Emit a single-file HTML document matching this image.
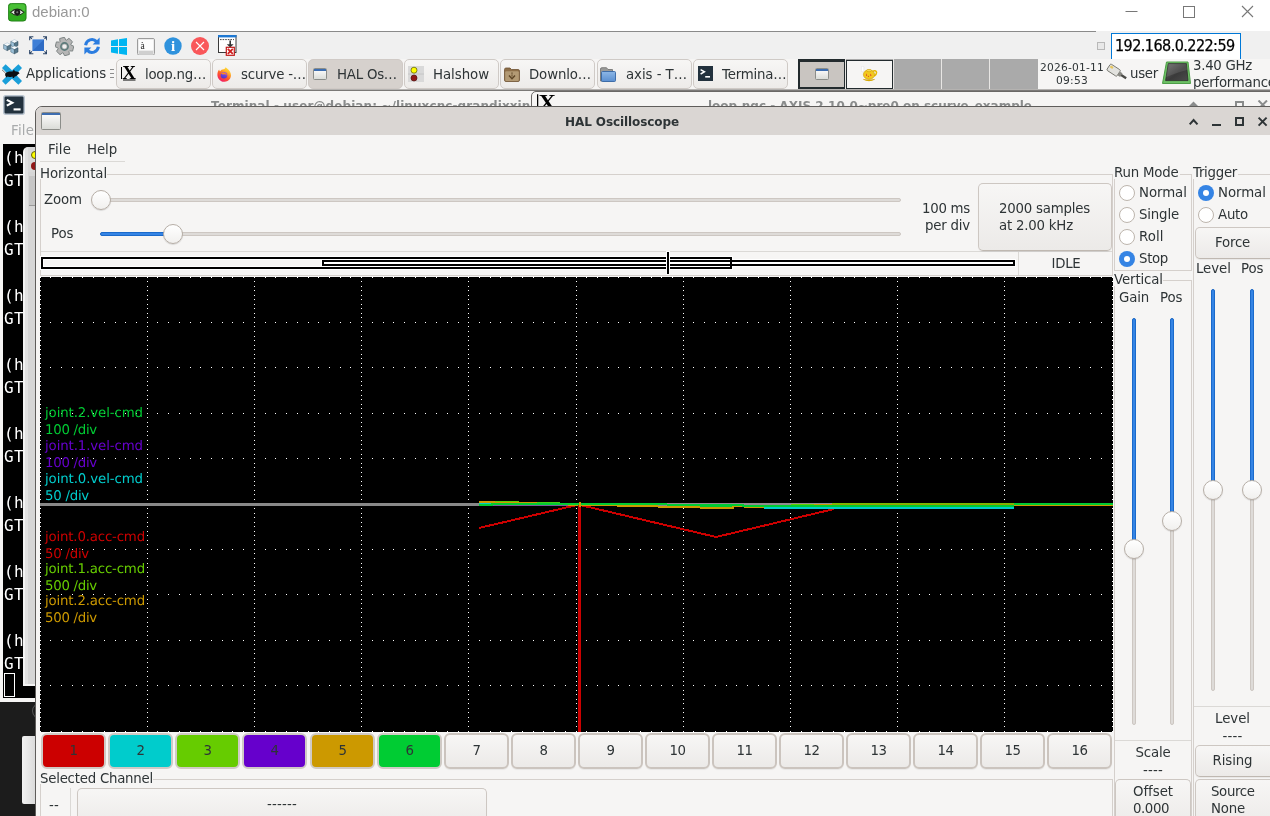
<!DOCTYPE html><html><head><meta charset="utf-8"><title>debian:0</title><style>
*{box-sizing:border-box;margin:0;padding:0}
html,body{width:1270px;height:816px;overflow:hidden;background:#f6f5f4}
body{position:relative;font-family:"DejaVu Sans","Liberation Sans",sans-serif;font-size:13.33px;color:#2e3436;line-height:1}
#root{position:absolute;left:0;top:0;width:1270px;height:816px;overflow:hidden;will-change:transform}
.a{position:absolute}
.t{position:absolute;white-space:nowrap;line-height:16px;height:16px;margin-top:1px}
.btn{position:absolute;border:1px solid #cdc7c2;border-bottom-color:#bfb8b1;border-radius:5px;background:linear-gradient(#f7f6f5,#eceae8);box-shadow:0 1px 1px rgba(0,0,0,.06)}
.hl{position:absolute;height:1px;background:#d5d0cc}
.vl{position:absolute;width:1px;background:#d5d0cc}
.sep{background:#dbd9d6}
.knob{position:absolute;width:20px;height:20px;border-radius:50%;border:1px solid #b6aea6;background:linear-gradient(#ffffff,#f1f0ee);box-shadow:0 1px 1px rgba(0,0,0,.12)}
.trough{position:absolute;background:#dedbd8;border:1px solid #cdc7c2;border-radius:2px}
.fill{position:absolute;background:#3584e4;border:1px solid #1b6acb;border-radius:2px}
.radio{position:absolute;width:16px;height:16px;border-radius:50%;border:1px solid #bdb5ad;background:#fff}
.radio.on{border:none;background:#3584e4}
.radio.on::after{content:"";position:absolute;left:5px;top:5px;width:6px;height:6px;border-radius:50%;background:#fff}
.tb{position:absolute;top:59px;height:30px;border:1px solid #cfcac6;border-radius:5px;background:linear-gradient(#f7f6f5,#edebe9)}
.tb.act{background:#d6d1cd;border-color:#d0cac6}
.tb span{position:absolute;left:28px;top:7px;line-height:16px;font-size:13.33px;white-space:nowrap}
</style></head><body><div id="root">
<div class="a" style="left:0;top:0;width:1270px;height:31px;background:#fff"></div>
<div class="a" style="left:0;top:32px;width:1270px;height:27px;background:#f0f0f0"></div>
<div class="a" style="left:0;top:31px;width:1096px;height:1px;background:#8a8a8a"></div>
<div class="a" style="left:1096px;top:31px;width:174px;height:1px;background:#f0f0f0"></div>
<svg class="a" style="left:8px;top:3px" width="18.5" height="18.5" viewBox="0 0 22 22" ><rect x="0.5" y="0.5" width="21" height="21" rx="3.5" fill="#2faa1e" stroke="#1d7a12"/><rect x="1.5" y="1.5" width="19" height="9" rx="3" fill="#5fd04a" opacity=".55"/><path d="M3 11 Q11 3.5 19 11 Q11 18.5 3 11Z" fill="#e9efe6" stroke="#1c2a18" stroke-width="1.2"/><circle cx="11" cy="11" r="3.6" fill="#1b1b1b"/><circle cx="11" cy="11" r="1.3" fill="#777"/></svg>
<div class="t" style="left:32px;top:2px;font-family:'Liberation Sans',sans-serif;font-size:15px;color:#999;line-height:18px;height:18px">debian:0</div>
<svg class="a" style="left:1110px;top:0" width="160" height="31" viewBox="0 0 160 31"><path d="M15.5 11.5H27.5" stroke="#777" stroke-width="1"/><rect x="73.5" y="6.5" width="11" height="11" fill="none" stroke="#777"/><path d="M132 6L143 17M143 6L132 17" stroke="#777" stroke-width="1.1"/></svg>
<svg class="a" style="left:2px;top:37px" width="18" height="18" viewBox="0 0 18 18" ><path d="M8.8 4.4 l3.6 -1.8 l3.6 1.8 l-3.6 1.8 z" fill="#f7fbfd" stroke="#8aa9bd" stroke-width=".4"/><path d="M8.8 4.4 l3.6 1.8 v4.2 l-3.6 -1.8 z" fill="#9cc0d8" stroke="#3f5f72" stroke-width=".5"/><path d="M12.4 6.2 l3.6 -1.8 v4.2 l-3.6 1.8 z" fill="#56788b" stroke="#2f4a5a" stroke-width=".5"/><path d="M1.6 7.6 l3.6 -1.8 l3.6 1.8 l-3.6 1.8 z" fill="#f7fbfd" stroke="#8aa9bd" stroke-width=".4"/><path d="M1.6 7.6 l3.6 1.8 v4.2 l-3.6 -1.8 z" fill="#9cc0d8" stroke="#3f5f72" stroke-width=".5"/><path d="M5.2 9.4 l3.6 -1.8 v4.2 l-3.6 1.8 z" fill="#56788b" stroke="#2f4a5a" stroke-width=".5"/><path d="M8.8 10.8 l3.6 -1.8 l3.6 1.8 l-3.6 1.8 z" fill="#f7fbfd" stroke="#8aa9bd" stroke-width=".4"/><path d="M8.8 10.8 l3.6 1.8 v4.2 l-3.6 -1.8 z" fill="#9cc0d8" stroke="#3f5f72" stroke-width=".5"/><path d="M12.4 12.6 l3.6 -1.8 v4.2 l-3.6 1.8 z" fill="#56788b" stroke="#2f4a5a" stroke-width=".5"/></svg>
<svg class="a" style="left:28.5px;top:36.4px" width="18.4" height="18.4" viewBox="0 0 19 19" ><rect x="3.5" y="3.5" width="12" height="12" fill="#3f7fd6"/><path d="M3.5 15.5 L15.5 3.5 V15.5Z" fill="#2f6cc4"/><g stroke="#2d4668" stroke-width="1.1" fill="none"><path d="M0.7 4.5V0.7H4.5M0.7 0.7L3 3"/><path d="M14.5 0.7H18.3V4.5M18.3 0.7L16 3"/><path d="M0.7 14.5V18.3H4.5M0.7 18.3L3 16"/><path d="M14.5 18.3H18.3V14.5M18.3 18.3L16 16"/></g></svg>
<svg class="a" style="left:55px;top:36.5px" width="19" height="19" viewBox="0 0 19 19" ><polygon points="4.65,1.57 9.41,0.20 10.70,2.91 11.53,3.12 13.94,1.33 17.51,4.78 15.81,7.25 16.04,8.07 18.80,9.26 17.60,14.08 14.61,13.84 14.01,14.45 14.35,17.43 9.59,18.80 8.30,16.09 7.47,15.88 5.06,17.67 1.49,14.22 3.19,11.75 2.96,10.93 0.20,9.74 1.40,4.92 4.39,5.16 4.99,4.55" fill="#b6b6b6" stroke="#7d8484" stroke-width="1" stroke-linejoin="round"/><circle cx="9.5" cy="9.5" r="3.6" fill="none" stroke="#5d7b7b" stroke-width="1.6"/><circle cx="9.5" cy="9.5" r="2" fill="#f0f0f0"/></svg>
<svg class="a" style="left:83px;top:37px" width="18" height="18" viewBox="0 0 18 18" ><g fill="none" stroke="#2b7de0" stroke-width="3"><path d="M2.6 8.2A6.4 6.4 0 0 1 13.6 4.6"/><path d="M15.4 9.8A6.4 6.4 0 0 1 4.4 13.4"/></g><path d="M16.6 0.5V7.6H9.6Z" fill="#2b7de0"/><path d="M1.4 17.5V10.4H8.4Z" fill="#2b7de0"/></svg>
<svg class="a" style="left:110.5px;top:38px" width="16.5" height="17" viewBox="0 0 16.5 17" ><path d="M0 2.4L7 1.3V8H0Z M8 1.15L16.5 0V8H8Z M0 9H7V15.7L0 14.6Z M8 9H16.5V17L8 15.85Z" fill="#00b5f1"/></svg>
<svg class="a" style="left:137px;top:37.5px" width="18" height="17.5" viewBox="0 0 18 17.5" ><rect x="0.5" y="0.5" width="17" height="16.5" rx="1.5" fill="#fafafa" stroke="#9c9c9c"/><rect x="1.5" y="13" width="15" height="3.2" fill="#cfcfcf"/><rect x="1.3" y="1.3" width="15.4" height="11.4" fill="#fdfdfd" stroke="#e2e2e2" stroke-width=".6"/><text x="3.6" y="10.6" font-family="Liberation Serif,serif" font-size="9.5" fill="#222">à</text></svg>
<svg class="a" style="left:164px;top:37.3px" width="18" height="18" viewBox="0 0 18 18" ><circle cx="9" cy="9" r="8.7" fill="#2f92dd"/><text x="9" y="14.2" text-anchor="middle" font-family="Liberation Serif,serif" font-weight="bold" font-size="15" fill="#fff">i</text></svg>
<svg class="a" style="left:191px;top:37.3px" width="18" height="18" viewBox="0 0 18 18" ><circle cx="9" cy="9" r="9" fill="#f9575a"/><path d="M5 5L13 13M13 5L5 13" stroke="#fff" stroke-width="1.1"/></svg>
<svg class="a" style="left:218px;top:35px" width="19" height="21" viewBox="0 0 19 21" ><rect x="0.5" y="0.5" width="17.5" height="17" fill="#fff" stroke="#3a3a3a"/><rect x="0" y="0" width="18.5" height="2.4" fill="#1e78d2"/><path d="M2 4.6H16" stroke="#444" stroke-width="1" stroke-dasharray="1.6 1"/><path d="M12.2 5.5V10.5" stroke="#333" stroke-width="1.6"/><path d="M8.8 9.2H15.6L12.2 12.6Z" fill="#333"/><rect x="8.3" y="12.3" width="8" height="8" fill="#fff" stroke="#c01818" stroke-width="1.2"/><path d="M9.8 13.8L14.8 18.8M14.8 13.8L9.8 18.8" stroke="#d21f1f" stroke-width="1.8"/></svg>
<div class="a" style="left:1111px;top:33px;width:130px;height:27px;background:#fff;border:1px solid #0078d7"></div>
<div class="t" style="left:1115px;top:35px;font-family:'DejaVu Sans Condensed','DejaVu Sans',sans-serif;font-size:16px;letter-spacing:-0.55px;-webkit-text-stroke:0.25px #000;color:#000;line-height:20px;height:20px">192.168.0.222:59</div>
<div class="a" style="left:1097px;top:42px;width:8px;height:8px;border:1px solid #b8b8b8;background:#e8e8e8"></div>
<div class="a" style="left:0;top:59px;width:1270px;height:31px;background:#f6f5f4"></div>
<div class="a" style="left:0;top:89px;width:1270px;height:1px;background:#b5b3b1"></div>
<div class="a" style="left:0;top:90px;width:1270px;height:1px;background:#7b7977"></div>
<svg class="a" style="left:2px;top:63.5px" width="20" height="21" viewBox="0 0 20 21" ><path d="M3.6 0.3L10 6.2L16.4 0.3L20 4L13.8 10.5L20 17L16.4 20.7L10 14.8L3.6 20.7L0 17L6.2 10.5L0 4Z" fill="#1a9fd9"/><path d="M3.5 9.2C5 7.6 8 7.2 10.5 7.6L12 5.6L13 7.4C14.5 7.2 16.5 8 17.6 9.2L15.8 10.6C15 12 13.5 12.6 12.5 12.8L12 14H10.6L10.8 12.8C9 13 7 13 5.6 12.4L4.6 13.6L3.8 12.4C3 11.4 3 10.2 3.5 9.2Z" fill="#0b0f12"/><path d="M0 5.8L3.8 9.4" stroke="#222" stroke-width=".6"/></svg>
<div class="t" style="left:26px;top:65px;letter-spacing:-0.120px">Applications</div>
<div class="a" style="left:110px;top:69px;width:4px;height:10px;background:linear-gradient(#8d8d8d 0 1px,transparent 1px 4px,#8d8d8d 4px 5px,transparent 5px 8px,#8d8d8d 8px 9px,transparent 9px)"></div>
<div class="tb" style="left:116px;width:95px"><span style="letter-spacing:-0.246px">loop.ng…</span></div>
<div class="tb" style="left:212px;width:95px"><span style="letter-spacing:-0.187px">scurve -…</span></div>
<div class="tb act" style="left:308px;width:95px"><span style="letter-spacing:-0.227px">HAL Os…</span></div>
<div class="tb" style="left:404px;width:95px"><span style="letter-spacing:-0.051px">Halshow</span></div>
<div class="tb" style="left:500px;width:95px"><span style="letter-spacing:-0.139px">Downlo…</span></div>
<div class="tb" style="left:597px;width:95px"><span style="letter-spacing:-0.053px">axis - T…</span></div>
<div class="tb" style="left:693px;width:95px"><span style="letter-spacing:-0.184px">Termina…</span></div>
<svg class="a" style="left:121px;top:66px" width="15" height="15" viewBox="0 0 15 15" ><text x="1.2" y="13" font-family="Liberation Serif,serif" font-weight="bold" font-size="19" fill="#000">X</text><path d="M0.5 1V13" stroke="#000" stroke-width="1"/><path d="M2 14H14.5" stroke="#000" stroke-width="1"/></svg>
<svg class="a" style="left:216.8px;top:66.6px" width="14.6" height="15" viewBox="0 0 14.6 15" ><defs><linearGradient id="ffg" x1="0.85" y1="0" x2="0.25" y2="1"><stop offset="0" stop-color="#fff03a"/><stop offset=".3" stop-color="#ffb52a"/><stop offset=".6" stop-color="#ff5a26"/><stop offset="1" stop-color="#f0166e"/></linearGradient><linearGradient id="ffp" x1="0.7" y1="0" x2="0.3" y2="1"><stop offset="0" stop-color="#9a4dea"/><stop offset="1" stop-color="#4338cc"/></linearGradient></defs><path d="M8.6 0.2C9.6 1.2 11.2 2 12.6 4C14.4 6.6 14.4 9.6 13 11.8C11.6 14 9.2 15 6.8 14.8C3.4 14.5 0.6 11.8 0.4 8.2C0.3 6 1 4 2.2 2.6C2.2 3.4 2.6 4 3.2 4.2C3.8 3 5 2.2 6.6 2.2C7.4 2.2 8.2 1.4 8.6 0.2Z" fill="url(#ffg)"/><circle cx="7" cy="8.2" r="3.3" fill="url(#ffp)"/><path d="M3.9 6.6C5 5.2 7.2 5 8.6 6C9.6 6.8 9.8 7.8 9.6 8.6C9 7.4 7.6 7 6.4 7.4C5.6 7.6 4.6 7.2 3.9 6.6Z" fill="#ff8a1e"/></svg>
<svg class="a" style="left:313px;top:68px" width="14" height="12" viewBox="0 0 14 12" ><defs><linearGradient id="wg313" x1="0" y1="0" x2="0" y2="1"><stop offset="0" stop-color="#fff"/><stop offset="1" stop-color="#d9dbd7"/></linearGradient></defs><rect x="0.5" y="0.5" width="13" height="11" rx="1" fill="url(#wg313)" stroke="#8b8d89"/><rect x="1" y="1" width="12" height="2" fill="#3d6db0"/></svg>
<svg class="a" style="left:408px;top:66px" width="16" height="16" viewBox="0 0 16 16" ><rect width="16" height="16" fill="#d9d9d9"/><path d="M0 8H16" stroke="#c6c6c6" stroke-width="1"/><circle cx="6" cy="4.2" r="3" fill="#ffff00" stroke="#555500" stroke-width=".7"/><circle cx="6" cy="12" r="3" fill="#901818" stroke="#501010" stroke-width=".7"/></svg>
<svg class="a" style="left:504px;top:67px" width="16" height="15" viewBox="0 0 16 15" ><path d="M0.5 2.5Q0.5 1 2 1H6L7.5 2.5H14Q15.5 2.5 15.5 4V13Q15.5 14.5 14 14.5H2Q0.5 14.5 0.5 13Z" fill="#8d6e48" stroke="#6e5232" stroke-width=".8"/><rect x="1.2" y="4.2" width="13.6" height="9.8" rx="1" fill="#b39a74"/><path d="M8 5.5V10" stroke="#5d4526" stroke-width="1.2" stroke-dasharray="1.2 .8"/><path d="M5 8.6L8 11.8L11 8.6" fill="none" stroke="#5d4526" stroke-width="1.4"/></svg>
<svg class="a" style="left:600px;top:66.5px" width="16.5" height="15.5" viewBox="0 0 16.5 15.5" ><path d="M0.5 2Q0.5 0.7 2 0.7H6.5L8 2.5H12.5V14H0.5Z" fill="#9a9a98" stroke="#6f6f6d" stroke-width=".8"/><defs><linearGradient id="fbg" x1="0" y1="0" x2="0" y2="1"><stop offset="0" stop-color="#8db7e6"/><stop offset="1" stop-color="#5b8fd0"/></linearGradient></defs><rect x="1.5" y="4.5" width="14" height="10" rx="1" fill="url(#fbg)" stroke="#3465a4" stroke-width=".9"/></svg>
<svg class="a" style="left:697.5px;top:66.3px" width="15" height="15" viewBox="0 0 15 15" ><rect width="15" height="15" fill="#22313d"/><g transform="scale(1 1)"><path d="M2.6 3.6L6.4 5.8L2.6 8" fill="none" stroke="#fff" stroke-width="1.5"/><path d="M7.2 10.8H12" stroke="#fff" stroke-width="1.6"/></g></svg>
<div class="a" style="left:798px;top:59px;width:240px;height:30px;background:#aaa"></div>
<div class="a" style="left:845px;top:59px;width:1px;height:30px;background:#e8e6e4"></div>
<div class="a" style="left:798px;top:59px;width:47px;height:30px;background:#c9c5c1;border:1px solid #232b2e;border-width:3px 1px 2px 2px"></div>
<div class="a" style="left:846px;top:60px;width:47px;height:29px;background:#f6f5f4;border:1px solid #232b2e"></div>
<div class="a" style="left:893px;top:59px;width:1px;height:30px;background:#e8e6e4"></div>
<div class="a" style="left:941px;top:59px;width:1px;height:30px;background:#e8e6e4"></div>
<div class="a" style="left:989px;top:59px;width:1px;height:30px;background:#e8e6e4"></div>
<svg class="a" style="left:815px;top:68px" width="14" height="12" viewBox="0 0 14 12" ><defs><linearGradient id="wg815" x1="0" y1="0" x2="0" y2="1"><stop offset="0" stop-color="#fff"/><stop offset="1" stop-color="#d9dbd7"/></linearGradient></defs><rect x="0.5" y="0.5" width="13" height="11" rx="1" fill="url(#wg815)" stroke="#8b8d89"/><rect x="1" y="1" width="12" height="2" fill="#3d6db0"/></svg>
<svg class="a" style="left:860.5px;top:66px" width="17" height="16" viewBox="0 0 17 16" ><path d="M11.5 5.5C15.5 3.2 17.2 7.2 13.2 10.2" fill="none" stroke="#e6b800" stroke-width="1.5"/><ellipse cx="8" cy="8.6" rx="5.6" ry="4.8" fill="#f2c81e" stroke="#c99a00" stroke-width=".6"/><ellipse cx="8" cy="4.6" rx="2.6" ry="1.1" fill="#f7dc5a" stroke="#c99a00" stroke-width=".5"/><path d="M2.4 13.4Q8 16.4 13.6 13.4Q8 14.6 2.4 13.4Z" fill="#e6b800" stroke="#c99a00" stroke-width=".5"/><rect x="0.3" y="0.2" width="2.6" height="5.6" rx="1.2" fill="#fff" stroke="#dcdcdc" stroke-width=".5"/><path d="M5.2 7.2l1 2.4l-1.2 .4z M9.4 7.4l1.2 2l-1.4 .6z M7.2 9.6l1 1.2l-1.4 .2z" fill="#e03a2a"/></svg>
<div class="t" style="left:1036px;top:60px;width:72px;text-align:center;font-size:10.67px;line-height:13px;letter-spacing:0.199px">2026-01-11</div>
<div class="t" style="left:1036px;top:73px;width:72px;text-align:center;font-size:10.67px;line-height:13px;letter-spacing:0.250px">09:53</div>
<svg class="a" style="left:1106px;top:63px" width="21" height="18" viewBox="0 0 21 18" ><g transform="rotate(33 10 9)"><rect x="1" y="5" width="12" height="7.5" rx="1.2" fill="#e2e2de" stroke="#77776f" stroke-width=".9"/><rect x="2.2" y="6.2" width="3" height="2.2" fill="#e8c65a"/><rect x="13" y="6.6" width="3.2" height="4.4" fill="#8a8a84"/><path d="M16 8.8H22" stroke="#4a4a46" stroke-width="2.4"/></g></svg>
<div class="t" style="left:1130px;top:65px;letter-spacing:-0.270px">user</div>
<svg class="a" style="left:1161.5px;top:61.3px" width="29" height="23.5" viewBox="0 0 29 23.5" ><path d="M4.5 1H26L28.5 22.5H0.5Z" fill="#6cc164" stroke="#4e9e48" stroke-width="1"/><defs><linearGradient id="cpg" x1="0" y1="0" x2="1" y2="1"><stop offset="0" stop-color="#6a6a6a"/><stop offset=".55" stop-color="#3a3a3a"/><stop offset="1" stop-color="#4b4b4b"/></linearGradient></defs><path d="M6.3 2.6H24.4L26 19.6H3.6Z" fill="url(#cpg)" stroke="#2c2c2c" stroke-width=".8"/><path d="M6.3 2.6H24.4L25 9C18 11 10 13.5 4.2 16Z" fill="#fff" opacity=".10"/></svg>
<div class="t" style="left:1193px;top:57px;letter-spacing:-0.285px">3.40 GHz</div>
<div class="a" style="left:1193px;top:72px;width:77px;height:17px;overflow:hidden"><div class="t" style="left:0;top:2px;letter-spacing:-0.238px">performance</div></div>
<div class="a" style="left:0;top:91px;width:1270px;height:725px;background:#1c1c1c"></div>
<div class="a" style="left:0;top:91px;width:540px;height:611px;background:#f6f5f4"></div>
<div class="a" style="left:3px;top:144px;width:534px;height:554px;background:#000"></div>
<svg class="a" style="left:3px;top:95px" width="22" height="20" viewBox="0 0 22 20" ><rect x="0.75" y="0.75" width="20.5" height="18.5" rx="2" fill="#22313d" stroke="#b9c4cf" stroke-width="1.5"/><g transform="scale(1.46667 1.33333)"><path d="M2.6 3.6L6.4 5.8L2.6 8" fill="none" stroke="#fff" stroke-width="1.5"/><path d="M7.2 10.8H12" stroke="#fff" stroke-width="1.6"/></g></svg>
<div class="t" style="left:211px;top:97px;font-weight:bold;font-size:12px;color:#8a8c8c;letter-spacing:0.090px">Terminal - user@debian: ~/linuxcnc-grandixxin</div>
<div class="t" style="left:11px;top:122px;color:#a9abac;letter-spacing:0.180px">File</div>
<div class="a" style="left:531px;top:91px;width:745px;height:30px;background:#f6f5f4;border:1px solid #6a6866;border-radius:5px 0 0 0"></div>
<svg class="a" style="left:536.5px;top:93.4px" width="19.05" height="19.05" viewBox="0 0 15 15" ><text x="1.2" y="13" font-family="Liberation Serif,serif" font-weight="bold" font-size="19" fill="#000">X</text><path d="M0.5 1V13" stroke="#000" stroke-width="1"/><path d="M2 14H14.5" stroke="#000" stroke-width="1"/></svg>
<div class="t" style="left:708px;top:97px;font-weight:bold;font-size:12px;color:#8a8c8c;letter-spacing:0.003px">loop.ngc - AXIS 2.10.0~pre0 on scurve_example</div>
<svg class="a" style="left:1185px;top:100px" width="85" height="8" viewBox="0 0 85 8"><path d="M4 6L8.5 1.5L13 6" fill="#8a8c8c"/><rect x="51" y="2" width="7" height="8" fill="none" stroke="#8a8c8c" stroke-width="2"/><path d="M73.5 0.5L82 9M82 0.5L73.5 9" stroke="#8a8c8c" stroke-width="2"/></svg>
<div class="t" style="left:4px;top:146px;font-family:'DejaVu Sans Mono',monospace;font-size:16px;color:#fff;line-height:22px;height:22px;letter-spacing:0.367px">(h</div>
<div class="t" style="left:4px;top:169px;font-family:'DejaVu Sans Mono',monospace;font-size:16px;color:#fff;line-height:22px;height:22px;letter-spacing:0.367px">GT</div>
<div class="t" style="left:4px;top:215px;font-family:'DejaVu Sans Mono',monospace;font-size:16px;color:#fff;line-height:22px;height:22px;letter-spacing:0.367px">(h</div>
<div class="t" style="left:4px;top:238px;font-family:'DejaVu Sans Mono',monospace;font-size:16px;color:#fff;line-height:22px;height:22px;letter-spacing:0.367px">GT</div>
<div class="t" style="left:4px;top:284px;font-family:'DejaVu Sans Mono',monospace;font-size:16px;color:#fff;line-height:22px;height:22px;letter-spacing:0.367px">(h</div>
<div class="t" style="left:4px;top:307px;font-family:'DejaVu Sans Mono',monospace;font-size:16px;color:#fff;line-height:22px;height:22px;letter-spacing:0.367px">GT</div>
<div class="t" style="left:4px;top:353px;font-family:'DejaVu Sans Mono',monospace;font-size:16px;color:#fff;line-height:22px;height:22px;letter-spacing:0.367px">(h</div>
<div class="t" style="left:4px;top:376px;font-family:'DejaVu Sans Mono',monospace;font-size:16px;color:#fff;line-height:22px;height:22px;letter-spacing:0.367px">GT</div>
<div class="t" style="left:4px;top:422px;font-family:'DejaVu Sans Mono',monospace;font-size:16px;color:#fff;line-height:22px;height:22px;letter-spacing:0.367px">(h</div>
<div class="t" style="left:4px;top:445px;font-family:'DejaVu Sans Mono',monospace;font-size:16px;color:#fff;line-height:22px;height:22px;letter-spacing:0.367px">GT</div>
<div class="t" style="left:4px;top:491px;font-family:'DejaVu Sans Mono',monospace;font-size:16px;color:#fff;line-height:22px;height:22px;letter-spacing:0.367px">(h</div>
<div class="t" style="left:4px;top:514px;font-family:'DejaVu Sans Mono',monospace;font-size:16px;color:#fff;line-height:22px;height:22px;letter-spacing:0.367px">GT</div>
<div class="t" style="left:4px;top:560px;font-family:'DejaVu Sans Mono',monospace;font-size:16px;color:#fff;line-height:22px;height:22px;letter-spacing:0.367px">(h</div>
<div class="t" style="left:4px;top:583px;font-family:'DejaVu Sans Mono',monospace;font-size:16px;color:#fff;line-height:22px;height:22px;letter-spacing:0.367px">GT</div>
<div class="t" style="left:4px;top:629px;font-family:'DejaVu Sans Mono',monospace;font-size:16px;color:#fff;line-height:22px;height:22px;letter-spacing:0.367px">(h</div>
<div class="t" style="left:4px;top:652px;font-family:'DejaVu Sans Mono',monospace;font-size:16px;color:#fff;line-height:22px;height:22px;letter-spacing:0.367px">GT</div>
<div class="a" style="left:4px;top:673px;width:11px;height:24px;border:1px solid #fff;background:#000"></div>
<div class="a" style="left:23px;top:147px;width:20px;height:539px;background:linear-gradient(90deg,#f4f4f4 0 2px,#e2e2e2 2px 5px,#d6d6d6 5px);border-radius:5px 0 0 0;border-bottom:2px solid #f4f4f4"></div>
<div class="a" style="left:29px;top:176px;width:10px;height:30px;background:#c6c6c6;border-bottom:1px solid #999"></div>
<div class="a" style="left:28px;top:150px;width:10px;height:22px;background:#d9d9d9"></div>
<div class="a" style="left:31px;top:151px;width:8px;height:8px;border-radius:50%;background:#ffff00;border:1px solid #666600"></div>
<div class="a" style="left:31px;top:162px;width:8px;height:8px;border-radius:50%;background:#901818"></div>
<div class="a" style="left:22px;top:736px;width:20px;height:68px;background:linear-gradient(90deg,#f2f2f2,#d9d9d9 14px);border-radius:2px"></div>
<div class="a" style="left:32px;top:702px;width:20px;height:18px;border:1px solid #555;border-radius:50%"></div>
<div class="a" style="left:35px;top:106px;width:1240px;height:720px;background:#f6f5f4;border:1px solid #5f5d5b;border-radius:7px 0 0 0"></div>
<div class="a" style="left:36px;top:107px;width:1234px;height:28px;background:#dad6d3;border-radius:6px 0 0 0"></div>
<svg class="a" style="left:41px;top:112px" width="20" height="18" viewBox="0 0 20 18" ><defs><linearGradient id="wg41" x1="0" y1="0" x2="0" y2="1"><stop offset="0" stop-color="#fff"/><stop offset="1" stop-color="#d9dbd7"/></linearGradient></defs><rect x="0.5" y="0.5" width="19" height="17" rx="1" fill="url(#wg41)" stroke="#8b8d89"/><rect x="1" y="1" width="18" height="2" fill="#3d6db0"/></svg>
<div class="t" style="left:522px;top:113px;width:200px;text-align:center;font-weight:bold;font-size:12px;letter-spacing:-0.089px">HAL Oscilloscope</div>
<svg class="a" style="left:1185px;top:114px" width="85" height="14" viewBox="0 0 85 14"><g stroke="#2e3436" stroke-width="2" fill="none"><path d="M4.7 10.3L8.6 6L12.5 10.3"/><path d="M27 11H36"/><rect x="51" y="4" width="7" height="7"/><path d="M73.6 3.6L81.6 11.6M81.6 3.6L73.6 11.6"/></g></svg>
<div class="t" style="left:48px;top:141px;letter-spacing:0.180px">File</div>
<div class="t" style="left:87px;top:141px;letter-spacing:-0.099px">Help</div>
<div class="hl sep" style="left:40px;top:161px;width:85px"></div>
<div class="t" style="left:40px;top:165px;letter-spacing:-0.108px">Horizontal</div>
<div class="hl" style="left:107px;top:174px;width:1006px"></div>
<div class="vl" style="left:40px;top:179px;height:97px"></div>
<div class="vl" style="left:1112px;top:174px;height:102px"></div>
<div class="hl" style="left:40px;top:275px;width:1073px"></div>
<div class="hl sep" style="left:41px;top:251px;width:1071px"></div>
<div class="vl sep" style="left:1018px;top:252px;height:23px"></div>
<div class="t" style="left:44px;top:191px;letter-spacing:-0.109px">Zoom</div>
<div class="t" style="left:51px;top:225px;letter-spacing:-0.048px">Pos</div>
<div class="trough" style="left:92px;top:198px;width:809px;height:4px"></div>
<div class="knob" style="left:91px;top:190px"></div>
<div class="trough" style="left:100px;top:232px;width:801px;height:4px"></div>
<div class="fill" style="left:100px;top:232px;width:74px;height:4px"></div>
<div class="knob" style="left:163px;top:224px"></div>
<div class="t" style="left:900px;top:200px;width:70px;text-align:right;letter-spacing:-0.270px">100 ms</div>
<div class="t" style="left:900px;top:217px;width:70px;text-align:right;letter-spacing:-0.206px">per div</div>
<div class="btn" style="left:978px;top:183px;width:134px;height:68px"></div>
<div class="t" style="left:999px;top:200px;letter-spacing:-0.216px">2000 samples</div>
<div class="t" style="left:999px;top:217px;letter-spacing:-0.210px">at 2.00 kHz</div>
<div class="t" style="left:1019px;top:255px;width:94px;text-align:center;letter-spacing:-0.263px">IDLE</div>
<div class="a" style="left:40px;top:256px;width:693px;height:14px;border:4px solid #fff"></div>
<div class="a" style="left:321px;top:259px;width:695px;height:8px;border:4px solid #fff;background:#fff"></div>
<div class="a" style="left:322px;top:260px;width:693px;height:6px;border:2px solid #000"></div>
<div class="a" style="left:41px;top:257px;width:691px;height:12px;border:2px solid #000"></div>
<div class="a" style="left:667px;top:252px;width:2px;height:22px;background:#000;box-shadow:0 0 0 1px #fff"></div>
<svg class="a" style="left:40px;top:277px" width="1073" height="455" viewBox="0 0 1073 455" shape-rendering="crispEdges">
<rect width="1073" height="455" fill="#000"/>
<path transform="translate(0,0.5)" d="M0 0h1M10 0h1M21 0h1M32 0h1M42 0h1M53 0h1M64 0h1M75 0h1M85 0h1M96 0h1M107 0h1M117 0h1M128 0h1M139 0h1M150 0h1M160 0h1M171 0h1M182 0h1M192 0h1M203 0h1M214 0h1M225 0h1M235 0h1M246 0h1M257 0h1M268 0h1M278 0h1M289 0h1M300 0h1M310 0h1M321 0h1M332 0h1M343 0h1M353 0h1M364 0h1M375 0h1M385 0h1M396 0h1M407 0h1M418 0h1M428 0h1M439 0h1M450 0h1M460 0h1M471 0h1M482 0h1M493 0h1M503 0h1M514 0h1M525 0h1M536 0h1M546 0h1M557 0h1M568 0h1M578 0h1M589 0h1M600 0h1M611 0h1M621 0h1M632 0h1M643 0h1M653 0h1M664 0h1M675 0h1M686 0h1M696 0h1M707 0h1M718 0h1M728 0h1M739 0h1M750 0h1M761 0h1M771 0h1M782 0h1M793 0h1M804 0h1M814 0h1M825 0h1M836 0h1M846 0h1M857 0h1M868 0h1M879 0h1M889 0h1M900 0h1M911 0h1M921 0h1M932 0h1M943 0h1M954 0h1M964 0h1M975 0h1M986 0h1M996 0h1M1007 0h1M1018 0h1M1029 0h1M1039 0h1M1050 0h1M1061 0h1M1072 0h1M0 45h1M10 45h1M21 45h1M32 45h1M42 45h1M53 45h1M64 45h1M75 45h1M85 45h1M96 45h1M107 45h1M117 45h1M128 45h1M139 45h1M150 45h1M160 45h1M171 45h1M182 45h1M192 45h1M203 45h1M214 45h1M225 45h1M235 45h1M246 45h1M257 45h1M268 45h1M278 45h1M289 45h1M300 45h1M310 45h1M321 45h1M332 45h1M343 45h1M353 45h1M364 45h1M375 45h1M385 45h1M396 45h1M407 45h1M418 45h1M428 45h1M439 45h1M450 45h1M460 45h1M471 45h1M482 45h1M493 45h1M503 45h1M514 45h1M525 45h1M536 45h1M546 45h1M557 45h1M568 45h1M578 45h1M589 45h1M600 45h1M611 45h1M621 45h1M632 45h1M643 45h1M653 45h1M664 45h1M675 45h1M686 45h1M696 45h1M707 45h1M718 45h1M728 45h1M739 45h1M750 45h1M761 45h1M771 45h1M782 45h1M793 45h1M804 45h1M814 45h1M825 45h1M836 45h1M846 45h1M857 45h1M868 45h1M879 45h1M889 45h1M900 45h1M911 45h1M921 45h1M932 45h1M943 45h1M954 45h1M964 45h1M975 45h1M986 45h1M996 45h1M1007 45h1M1018 45h1M1029 45h1M1039 45h1M1050 45h1M1061 45h1M1072 45h1M0 90h1M10 90h1M21 90h1M32 90h1M42 90h1M53 90h1M64 90h1M75 90h1M85 90h1M96 90h1M107 90h1M117 90h1M128 90h1M139 90h1M150 90h1M160 90h1M171 90h1M182 90h1M192 90h1M203 90h1M214 90h1M225 90h1M235 90h1M246 90h1M257 90h1M268 90h1M278 90h1M289 90h1M300 90h1M310 90h1M321 90h1M332 90h1M343 90h1M353 90h1M364 90h1M375 90h1M385 90h1M396 90h1M407 90h1M418 90h1M428 90h1M439 90h1M450 90h1M460 90h1M471 90h1M482 90h1M493 90h1M503 90h1M514 90h1M525 90h1M536 90h1M546 90h1M557 90h1M568 90h1M578 90h1M589 90h1M600 90h1M611 90h1M621 90h1M632 90h1M643 90h1M653 90h1M664 90h1M675 90h1M686 90h1M696 90h1M707 90h1M718 90h1M728 90h1M739 90h1M750 90h1M761 90h1M771 90h1M782 90h1M793 90h1M804 90h1M814 90h1M825 90h1M836 90h1M846 90h1M857 90h1M868 90h1M879 90h1M889 90h1M900 90h1M911 90h1M921 90h1M932 90h1M943 90h1M954 90h1M964 90h1M975 90h1M986 90h1M996 90h1M1007 90h1M1018 90h1M1029 90h1M1039 90h1M1050 90h1M1061 90h1M1072 90h1M0 136h1M10 136h1M21 136h1M32 136h1M42 136h1M53 136h1M64 136h1M75 136h1M85 136h1M96 136h1M107 136h1M117 136h1M128 136h1M139 136h1M150 136h1M160 136h1M171 136h1M182 136h1M192 136h1M203 136h1M214 136h1M225 136h1M235 136h1M246 136h1M257 136h1M268 136h1M278 136h1M289 136h1M300 136h1M310 136h1M321 136h1M332 136h1M343 136h1M353 136h1M364 136h1M375 136h1M385 136h1M396 136h1M407 136h1M418 136h1M428 136h1M439 136h1M450 136h1M460 136h1M471 136h1M482 136h1M493 136h1M503 136h1M514 136h1M525 136h1M536 136h1M546 136h1M557 136h1M568 136h1M578 136h1M589 136h1M600 136h1M611 136h1M621 136h1M632 136h1M643 136h1M653 136h1M664 136h1M675 136h1M686 136h1M696 136h1M707 136h1M718 136h1M728 136h1M739 136h1M750 136h1M761 136h1M771 136h1M782 136h1M793 136h1M804 136h1M814 136h1M825 136h1M836 136h1M846 136h1M857 136h1M868 136h1M879 136h1M889 136h1M900 136h1M911 136h1M921 136h1M932 136h1M943 136h1M954 136h1M964 136h1M975 136h1M986 136h1M996 136h1M1007 136h1M1018 136h1M1029 136h1M1039 136h1M1050 136h1M1061 136h1M1072 136h1M0 181h1M10 181h1M21 181h1M32 181h1M42 181h1M53 181h1M64 181h1M75 181h1M85 181h1M96 181h1M107 181h1M117 181h1M128 181h1M139 181h1M150 181h1M160 181h1M171 181h1M182 181h1M192 181h1M203 181h1M214 181h1M225 181h1M235 181h1M246 181h1M257 181h1M268 181h1M278 181h1M289 181h1M300 181h1M310 181h1M321 181h1M332 181h1M343 181h1M353 181h1M364 181h1M375 181h1M385 181h1M396 181h1M407 181h1M418 181h1M428 181h1M439 181h1M450 181h1M460 181h1M471 181h1M482 181h1M493 181h1M503 181h1M514 181h1M525 181h1M536 181h1M546 181h1M557 181h1M568 181h1M578 181h1M589 181h1M600 181h1M611 181h1M621 181h1M632 181h1M643 181h1M653 181h1M664 181h1M675 181h1M686 181h1M696 181h1M707 181h1M718 181h1M728 181h1M739 181h1M750 181h1M761 181h1M771 181h1M782 181h1M793 181h1M804 181h1M814 181h1M825 181h1M836 181h1M846 181h1M857 181h1M868 181h1M879 181h1M889 181h1M900 181h1M911 181h1M921 181h1M932 181h1M943 181h1M954 181h1M964 181h1M975 181h1M986 181h1M996 181h1M1007 181h1M1018 181h1M1029 181h1M1039 181h1M1050 181h1M1061 181h1M1072 181h1M0 227h1M10 227h1M21 227h1M32 227h1M42 227h1M53 227h1M64 227h1M75 227h1M85 227h1M96 227h1M107 227h1M117 227h1M128 227h1M139 227h1M150 227h1M160 227h1M171 227h1M182 227h1M192 227h1M203 227h1M214 227h1M225 227h1M235 227h1M246 227h1M257 227h1M268 227h1M278 227h1M289 227h1M300 227h1M310 227h1M321 227h1M332 227h1M343 227h1M353 227h1M364 227h1M375 227h1M385 227h1M396 227h1M407 227h1M418 227h1M428 227h1M439 227h1M450 227h1M460 227h1M471 227h1M482 227h1M493 227h1M503 227h1M514 227h1M525 227h1M536 227h1M546 227h1M557 227h1M568 227h1M578 227h1M589 227h1M600 227h1M611 227h1M621 227h1M632 227h1M643 227h1M653 227h1M664 227h1M675 227h1M686 227h1M696 227h1M707 227h1M718 227h1M728 227h1M739 227h1M750 227h1M761 227h1M771 227h1M782 227h1M793 227h1M804 227h1M814 227h1M825 227h1M836 227h1M846 227h1M857 227h1M868 227h1M879 227h1M889 227h1M900 227h1M911 227h1M921 227h1M932 227h1M943 227h1M954 227h1M964 227h1M975 227h1M986 227h1M996 227h1M1007 227h1M1018 227h1M1029 227h1M1039 227h1M1050 227h1M1061 227h1M1072 227h1M0 272h1M10 272h1M21 272h1M32 272h1M42 272h1M53 272h1M64 272h1M75 272h1M85 272h1M96 272h1M107 272h1M117 272h1M128 272h1M139 272h1M150 272h1M160 272h1M171 272h1M182 272h1M192 272h1M203 272h1M214 272h1M225 272h1M235 272h1M246 272h1M257 272h1M268 272h1M278 272h1M289 272h1M300 272h1M310 272h1M321 272h1M332 272h1M343 272h1M353 272h1M364 272h1M375 272h1M385 272h1M396 272h1M407 272h1M418 272h1M428 272h1M439 272h1M450 272h1M460 272h1M471 272h1M482 272h1M493 272h1M503 272h1M514 272h1M525 272h1M536 272h1M546 272h1M557 272h1M568 272h1M578 272h1M589 272h1M600 272h1M611 272h1M621 272h1M632 272h1M643 272h1M653 272h1M664 272h1M675 272h1M686 272h1M696 272h1M707 272h1M718 272h1M728 272h1M739 272h1M750 272h1M761 272h1M771 272h1M782 272h1M793 272h1M804 272h1M814 272h1M825 272h1M836 272h1M846 272h1M857 272h1M868 272h1M879 272h1M889 272h1M900 272h1M911 272h1M921 272h1M932 272h1M943 272h1M954 272h1M964 272h1M975 272h1M986 272h1M996 272h1M1007 272h1M1018 272h1M1029 272h1M1039 272h1M1050 272h1M1061 272h1M1072 272h1M0 317h1M10 317h1M21 317h1M32 317h1M42 317h1M53 317h1M64 317h1M75 317h1M85 317h1M96 317h1M107 317h1M117 317h1M128 317h1M139 317h1M150 317h1M160 317h1M171 317h1M182 317h1M192 317h1M203 317h1M214 317h1M225 317h1M235 317h1M246 317h1M257 317h1M268 317h1M278 317h1M289 317h1M300 317h1M310 317h1M321 317h1M332 317h1M343 317h1M353 317h1M364 317h1M375 317h1M385 317h1M396 317h1M407 317h1M418 317h1M428 317h1M439 317h1M450 317h1M460 317h1M471 317h1M482 317h1M493 317h1M503 317h1M514 317h1M525 317h1M536 317h1M546 317h1M557 317h1M568 317h1M578 317h1M589 317h1M600 317h1M611 317h1M621 317h1M632 317h1M643 317h1M653 317h1M664 317h1M675 317h1M686 317h1M696 317h1M707 317h1M718 317h1M728 317h1M739 317h1M750 317h1M761 317h1M771 317h1M782 317h1M793 317h1M804 317h1M814 317h1M825 317h1M836 317h1M846 317h1M857 317h1M868 317h1M879 317h1M889 317h1M900 317h1M911 317h1M921 317h1M932 317h1M943 317h1M954 317h1M964 317h1M975 317h1M986 317h1M996 317h1M1007 317h1M1018 317h1M1029 317h1M1039 317h1M1050 317h1M1061 317h1M1072 317h1M0 363h1M10 363h1M21 363h1M32 363h1M42 363h1M53 363h1M64 363h1M75 363h1M85 363h1M96 363h1M107 363h1M117 363h1M128 363h1M139 363h1M150 363h1M160 363h1M171 363h1M182 363h1M192 363h1M203 363h1M214 363h1M225 363h1M235 363h1M246 363h1M257 363h1M268 363h1M278 363h1M289 363h1M300 363h1M310 363h1M321 363h1M332 363h1M343 363h1M353 363h1M364 363h1M375 363h1M385 363h1M396 363h1M407 363h1M418 363h1M428 363h1M439 363h1M450 363h1M460 363h1M471 363h1M482 363h1M493 363h1M503 363h1M514 363h1M525 363h1M536 363h1M546 363h1M557 363h1M568 363h1M578 363h1M589 363h1M600 363h1M611 363h1M621 363h1M632 363h1M643 363h1M653 363h1M664 363h1M675 363h1M686 363h1M696 363h1M707 363h1M718 363h1M728 363h1M739 363h1M750 363h1M761 363h1M771 363h1M782 363h1M793 363h1M804 363h1M814 363h1M825 363h1M836 363h1M846 363h1M857 363h1M868 363h1M879 363h1M889 363h1M900 363h1M911 363h1M921 363h1M932 363h1M943 363h1M954 363h1M964 363h1M975 363h1M986 363h1M996 363h1M1007 363h1M1018 363h1M1029 363h1M1039 363h1M1050 363h1M1061 363h1M1072 363h1M0 408h1M10 408h1M21 408h1M32 408h1M42 408h1M53 408h1M64 408h1M75 408h1M85 408h1M96 408h1M107 408h1M117 408h1M128 408h1M139 408h1M150 408h1M160 408h1M171 408h1M182 408h1M192 408h1M203 408h1M214 408h1M225 408h1M235 408h1M246 408h1M257 408h1M268 408h1M278 408h1M289 408h1M300 408h1M310 408h1M321 408h1M332 408h1M343 408h1M353 408h1M364 408h1M375 408h1M385 408h1M396 408h1M407 408h1M418 408h1M428 408h1M439 408h1M450 408h1M460 408h1M471 408h1M482 408h1M493 408h1M503 408h1M514 408h1M525 408h1M536 408h1M546 408h1M557 408h1M568 408h1M578 408h1M589 408h1M600 408h1M611 408h1M621 408h1M632 408h1M643 408h1M653 408h1M664 408h1M675 408h1M686 408h1M696 408h1M707 408h1M718 408h1M728 408h1M739 408h1M750 408h1M761 408h1M771 408h1M782 408h1M793 408h1M804 408h1M814 408h1M825 408h1M836 408h1M846 408h1M857 408h1M868 408h1M879 408h1M889 408h1M900 408h1M911 408h1M921 408h1M932 408h1M943 408h1M954 408h1M964 408h1M975 408h1M986 408h1M996 408h1M1007 408h1M1018 408h1M1029 408h1M1039 408h1M1050 408h1M1061 408h1M1072 408h1M0 454h1M10 454h1M21 454h1M32 454h1M42 454h1M53 454h1M64 454h1M75 454h1M85 454h1M96 454h1M107 454h1M117 454h1M128 454h1M139 454h1M150 454h1M160 454h1M171 454h1M182 454h1M192 454h1M203 454h1M214 454h1M225 454h1M235 454h1M246 454h1M257 454h1M268 454h1M278 454h1M289 454h1M300 454h1M310 454h1M321 454h1M332 454h1M343 454h1M353 454h1M364 454h1M375 454h1M385 454h1M396 454h1M407 454h1M418 454h1M428 454h1M439 454h1M450 454h1M460 454h1M471 454h1M482 454h1M493 454h1M503 454h1M514 454h1M525 454h1M536 454h1M546 454h1M557 454h1M568 454h1M578 454h1M589 454h1M600 454h1M611 454h1M621 454h1M632 454h1M643 454h1M653 454h1M664 454h1M675 454h1M686 454h1M696 454h1M707 454h1M718 454h1M728 454h1M739 454h1M750 454h1M761 454h1M771 454h1M782 454h1M793 454h1M804 454h1M814 454h1M825 454h1M836 454h1M846 454h1M857 454h1M868 454h1M879 454h1M889 454h1M900 454h1M911 454h1M921 454h1M932 454h1M943 454h1M954 454h1M964 454h1M975 454h1M986 454h1M996 454h1M1007 454h1M1018 454h1M1029 454h1M1039 454h1M1050 454h1M1061 454h1M1072 454h1M0 0h1M0 4h1M0 9h1M0 13h1M0 18h1M0 22h1M0 27h1M0 31h1M0 36h1M0 40h1M0 45h1M0 49h1M0 54h1M0 59h1M0 63h1M0 68h1M0 72h1M0 77h1M0 81h1M0 86h1M0 90h1M0 95h1M0 99h1M0 104h1M0 108h1M0 113h1M0 118h1M0 122h1M0 127h1M0 131h1M0 136h1M0 140h1M0 145h1M0 149h1M0 154h1M0 158h1M0 163h1M0 167h1M0 172h1M0 177h1M0 181h1M0 186h1M0 190h1M0 195h1M0 199h1M0 204h1M0 208h1M0 213h1M0 217h1M0 222h1M0 227h1M0 231h1M0 236h1M0 240h1M0 245h1M0 249h1M0 254h1M0 258h1M0 263h1M0 267h1M0 272h1M0 276h1M0 281h1M0 286h1M0 290h1M0 295h1M0 299h1M0 304h1M0 308h1M0 313h1M0 317h1M0 322h1M0 326h1M0 331h1M0 335h1M0 340h1M0 345h1M0 349h1M0 354h1M0 358h1M0 363h1M0 367h1M0 372h1M0 376h1M0 381h1M0 385h1M0 390h1M0 394h1M0 399h1M0 404h1M0 408h1M0 413h1M0 417h1M0 422h1M0 426h1M0 431h1M0 435h1M0 440h1M0 444h1M0 449h1M0 454h1M107 0h1M107 4h1M107 9h1M107 13h1M107 18h1M107 22h1M107 27h1M107 31h1M107 36h1M107 40h1M107 45h1M107 49h1M107 54h1M107 59h1M107 63h1M107 68h1M107 72h1M107 77h1M107 81h1M107 86h1M107 90h1M107 95h1M107 99h1M107 104h1M107 108h1M107 113h1M107 118h1M107 122h1M107 127h1M107 131h1M107 136h1M107 140h1M107 145h1M107 149h1M107 154h1M107 158h1M107 163h1M107 167h1M107 172h1M107 177h1M107 181h1M107 186h1M107 190h1M107 195h1M107 199h1M107 204h1M107 208h1M107 213h1M107 217h1M107 222h1M107 227h1M107 231h1M107 236h1M107 240h1M107 245h1M107 249h1M107 254h1M107 258h1M107 263h1M107 267h1M107 272h1M107 276h1M107 281h1M107 286h1M107 290h1M107 295h1M107 299h1M107 304h1M107 308h1M107 313h1M107 317h1M107 322h1M107 326h1M107 331h1M107 335h1M107 340h1M107 345h1M107 349h1M107 354h1M107 358h1M107 363h1M107 367h1M107 372h1M107 376h1M107 381h1M107 385h1M107 390h1M107 394h1M107 399h1M107 404h1M107 408h1M107 413h1M107 417h1M107 422h1M107 426h1M107 431h1M107 435h1M107 440h1M107 444h1M107 449h1M107 454h1M214 0h1M214 4h1M214 9h1M214 13h1M214 18h1M214 22h1M214 27h1M214 31h1M214 36h1M214 40h1M214 45h1M214 49h1M214 54h1M214 59h1M214 63h1M214 68h1M214 72h1M214 77h1M214 81h1M214 86h1M214 90h1M214 95h1M214 99h1M214 104h1M214 108h1M214 113h1M214 118h1M214 122h1M214 127h1M214 131h1M214 136h1M214 140h1M214 145h1M214 149h1M214 154h1M214 158h1M214 163h1M214 167h1M214 172h1M214 177h1M214 181h1M214 186h1M214 190h1M214 195h1M214 199h1M214 204h1M214 208h1M214 213h1M214 217h1M214 222h1M214 227h1M214 231h1M214 236h1M214 240h1M214 245h1M214 249h1M214 254h1M214 258h1M214 263h1M214 267h1M214 272h1M214 276h1M214 281h1M214 286h1M214 290h1M214 295h1M214 299h1M214 304h1M214 308h1M214 313h1M214 317h1M214 322h1M214 326h1M214 331h1M214 335h1M214 340h1M214 345h1M214 349h1M214 354h1M214 358h1M214 363h1M214 367h1M214 372h1M214 376h1M214 381h1M214 385h1M214 390h1M214 394h1M214 399h1M214 404h1M214 408h1M214 413h1M214 417h1M214 422h1M214 426h1M214 431h1M214 435h1M214 440h1M214 444h1M214 449h1M214 454h1M321 0h1M321 4h1M321 9h1M321 13h1M321 18h1M321 22h1M321 27h1M321 31h1M321 36h1M321 40h1M321 45h1M321 49h1M321 54h1M321 59h1M321 63h1M321 68h1M321 72h1M321 77h1M321 81h1M321 86h1M321 90h1M321 95h1M321 99h1M321 104h1M321 108h1M321 113h1M321 118h1M321 122h1M321 127h1M321 131h1M321 136h1M321 140h1M321 145h1M321 149h1M321 154h1M321 158h1M321 163h1M321 167h1M321 172h1M321 177h1M321 181h1M321 186h1M321 190h1M321 195h1M321 199h1M321 204h1M321 208h1M321 213h1M321 217h1M321 222h1M321 227h1M321 231h1M321 236h1M321 240h1M321 245h1M321 249h1M321 254h1M321 258h1M321 263h1M321 267h1M321 272h1M321 276h1M321 281h1M321 286h1M321 290h1M321 295h1M321 299h1M321 304h1M321 308h1M321 313h1M321 317h1M321 322h1M321 326h1M321 331h1M321 335h1M321 340h1M321 345h1M321 349h1M321 354h1M321 358h1M321 363h1M321 367h1M321 372h1M321 376h1M321 381h1M321 385h1M321 390h1M321 394h1M321 399h1M321 404h1M321 408h1M321 413h1M321 417h1M321 422h1M321 426h1M321 431h1M321 435h1M321 440h1M321 444h1M321 449h1M321 454h1M428 0h1M428 4h1M428 9h1M428 13h1M428 18h1M428 22h1M428 27h1M428 31h1M428 36h1M428 40h1M428 45h1M428 49h1M428 54h1M428 59h1M428 63h1M428 68h1M428 72h1M428 77h1M428 81h1M428 86h1M428 90h1M428 95h1M428 99h1M428 104h1M428 108h1M428 113h1M428 118h1M428 122h1M428 127h1M428 131h1M428 136h1M428 140h1M428 145h1M428 149h1M428 154h1M428 158h1M428 163h1M428 167h1M428 172h1M428 177h1M428 181h1M428 186h1M428 190h1M428 195h1M428 199h1M428 204h1M428 208h1M428 213h1M428 217h1M428 222h1M428 227h1M428 231h1M428 236h1M428 240h1M428 245h1M428 249h1M428 254h1M428 258h1M428 263h1M428 267h1M428 272h1M428 276h1M428 281h1M428 286h1M428 290h1M428 295h1M428 299h1M428 304h1M428 308h1M428 313h1M428 317h1M428 322h1M428 326h1M428 331h1M428 335h1M428 340h1M428 345h1M428 349h1M428 354h1M428 358h1M428 363h1M428 367h1M428 372h1M428 376h1M428 381h1M428 385h1M428 390h1M428 394h1M428 399h1M428 404h1M428 408h1M428 413h1M428 417h1M428 422h1M428 426h1M428 431h1M428 435h1M428 440h1M428 444h1M428 449h1M428 454h1M536 0h1M536 4h1M536 9h1M536 13h1M536 18h1M536 22h1M536 27h1M536 31h1M536 36h1M536 40h1M536 45h1M536 49h1M536 54h1M536 59h1M536 63h1M536 68h1M536 72h1M536 77h1M536 81h1M536 86h1M536 90h1M536 95h1M536 99h1M536 104h1M536 108h1M536 113h1M536 118h1M536 122h1M536 127h1M536 131h1M536 136h1M536 140h1M536 145h1M536 149h1M536 154h1M536 158h1M536 163h1M536 167h1M536 172h1M536 177h1M536 181h1M536 186h1M536 190h1M536 195h1M536 199h1M536 204h1M536 208h1M536 213h1M536 217h1M536 222h1M536 227h1M536 231h1M536 236h1M536 240h1M536 245h1M536 249h1M536 254h1M536 258h1M536 263h1M536 267h1M536 272h1M536 276h1M536 281h1M536 286h1M536 290h1M536 295h1M536 299h1M536 304h1M536 308h1M536 313h1M536 317h1M536 322h1M536 326h1M536 331h1M536 335h1M536 340h1M536 345h1M536 349h1M536 354h1M536 358h1M536 363h1M536 367h1M536 372h1M536 376h1M536 381h1M536 385h1M536 390h1M536 394h1M536 399h1M536 404h1M536 408h1M536 413h1M536 417h1M536 422h1M536 426h1M536 431h1M536 435h1M536 440h1M536 444h1M536 449h1M536 454h1M643 0h1M643 4h1M643 9h1M643 13h1M643 18h1M643 22h1M643 27h1M643 31h1M643 36h1M643 40h1M643 45h1M643 49h1M643 54h1M643 59h1M643 63h1M643 68h1M643 72h1M643 77h1M643 81h1M643 86h1M643 90h1M643 95h1M643 99h1M643 104h1M643 108h1M643 113h1M643 118h1M643 122h1M643 127h1M643 131h1M643 136h1M643 140h1M643 145h1M643 149h1M643 154h1M643 158h1M643 163h1M643 167h1M643 172h1M643 177h1M643 181h1M643 186h1M643 190h1M643 195h1M643 199h1M643 204h1M643 208h1M643 213h1M643 217h1M643 222h1M643 227h1M643 231h1M643 236h1M643 240h1M643 245h1M643 249h1M643 254h1M643 258h1M643 263h1M643 267h1M643 272h1M643 276h1M643 281h1M643 286h1M643 290h1M643 295h1M643 299h1M643 304h1M643 308h1M643 313h1M643 317h1M643 322h1M643 326h1M643 331h1M643 335h1M643 340h1M643 345h1M643 349h1M643 354h1M643 358h1M643 363h1M643 367h1M643 372h1M643 376h1M643 381h1M643 385h1M643 390h1M643 394h1M643 399h1M643 404h1M643 408h1M643 413h1M643 417h1M643 422h1M643 426h1M643 431h1M643 435h1M643 440h1M643 444h1M643 449h1M643 454h1M750 0h1M750 4h1M750 9h1M750 13h1M750 18h1M750 22h1M750 27h1M750 31h1M750 36h1M750 40h1M750 45h1M750 49h1M750 54h1M750 59h1M750 63h1M750 68h1M750 72h1M750 77h1M750 81h1M750 86h1M750 90h1M750 95h1M750 99h1M750 104h1M750 108h1M750 113h1M750 118h1M750 122h1M750 127h1M750 131h1M750 136h1M750 140h1M750 145h1M750 149h1M750 154h1M750 158h1M750 163h1M750 167h1M750 172h1M750 177h1M750 181h1M750 186h1M750 190h1M750 195h1M750 199h1M750 204h1M750 208h1M750 213h1M750 217h1M750 222h1M750 227h1M750 231h1M750 236h1M750 240h1M750 245h1M750 249h1M750 254h1M750 258h1M750 263h1M750 267h1M750 272h1M750 276h1M750 281h1M750 286h1M750 290h1M750 295h1M750 299h1M750 304h1M750 308h1M750 313h1M750 317h1M750 322h1M750 326h1M750 331h1M750 335h1M750 340h1M750 345h1M750 349h1M750 354h1M750 358h1M750 363h1M750 367h1M750 372h1M750 376h1M750 381h1M750 385h1M750 390h1M750 394h1M750 399h1M750 404h1M750 408h1M750 413h1M750 417h1M750 422h1M750 426h1M750 431h1M750 435h1M750 440h1M750 444h1M750 449h1M750 454h1M857 0h1M857 4h1M857 9h1M857 13h1M857 18h1M857 22h1M857 27h1M857 31h1M857 36h1M857 40h1M857 45h1M857 49h1M857 54h1M857 59h1M857 63h1M857 68h1M857 72h1M857 77h1M857 81h1M857 86h1M857 90h1M857 95h1M857 99h1M857 104h1M857 108h1M857 113h1M857 118h1M857 122h1M857 127h1M857 131h1M857 136h1M857 140h1M857 145h1M857 149h1M857 154h1M857 158h1M857 163h1M857 167h1M857 172h1M857 177h1M857 181h1M857 186h1M857 190h1M857 195h1M857 199h1M857 204h1M857 208h1M857 213h1M857 217h1M857 222h1M857 227h1M857 231h1M857 236h1M857 240h1M857 245h1M857 249h1M857 254h1M857 258h1M857 263h1M857 267h1M857 272h1M857 276h1M857 281h1M857 286h1M857 290h1M857 295h1M857 299h1M857 304h1M857 308h1M857 313h1M857 317h1M857 322h1M857 326h1M857 331h1M857 335h1M857 340h1M857 345h1M857 349h1M857 354h1M857 358h1M857 363h1M857 367h1M857 372h1M857 376h1M857 381h1M857 385h1M857 390h1M857 394h1M857 399h1M857 404h1M857 408h1M857 413h1M857 417h1M857 422h1M857 426h1M857 431h1M857 435h1M857 440h1M857 444h1M857 449h1M857 454h1M964 0h1M964 4h1M964 9h1M964 13h1M964 18h1M964 22h1M964 27h1M964 31h1M964 36h1M964 40h1M964 45h1M964 49h1M964 54h1M964 59h1M964 63h1M964 68h1M964 72h1M964 77h1M964 81h1M964 86h1M964 90h1M964 95h1M964 99h1M964 104h1M964 108h1M964 113h1M964 118h1M964 122h1M964 127h1M964 131h1M964 136h1M964 140h1M964 145h1M964 149h1M964 154h1M964 158h1M964 163h1M964 167h1M964 172h1M964 177h1M964 181h1M964 186h1M964 190h1M964 195h1M964 199h1M964 204h1M964 208h1M964 213h1M964 217h1M964 222h1M964 227h1M964 231h1M964 236h1M964 240h1M964 245h1M964 249h1M964 254h1M964 258h1M964 263h1M964 267h1M964 272h1M964 276h1M964 281h1M964 286h1M964 290h1M964 295h1M964 299h1M964 304h1M964 308h1M964 313h1M964 317h1M964 322h1M964 326h1M964 331h1M964 335h1M964 340h1M964 345h1M964 349h1M964 354h1M964 358h1M964 363h1M964 367h1M964 372h1M964 376h1M964 381h1M964 385h1M964 390h1M964 394h1M964 399h1M964 404h1M964 408h1M964 413h1M964 417h1M964 422h1M964 426h1M964 431h1M964 435h1M964 440h1M964 444h1M964 449h1M964 454h1M1072 0h1M1072 4h1M1072 9h1M1072 13h1M1072 18h1M1072 22h1M1072 27h1M1072 31h1M1072 36h1M1072 40h1M1072 45h1M1072 49h1M1072 54h1M1072 59h1M1072 63h1M1072 68h1M1072 72h1M1072 77h1M1072 81h1M1072 86h1M1072 90h1M1072 95h1M1072 99h1M1072 104h1M1072 108h1M1072 113h1M1072 118h1M1072 122h1M1072 127h1M1072 131h1M1072 136h1M1072 140h1M1072 145h1M1072 149h1M1072 154h1M1072 158h1M1072 163h1M1072 167h1M1072 172h1M1072 177h1M1072 181h1M1072 186h1M1072 190h1M1072 195h1M1072 199h1M1072 204h1M1072 208h1M1072 213h1M1072 217h1M1072 222h1M1072 227h1M1072 231h1M1072 236h1M1072 240h1M1072 245h1M1072 249h1M1072 254h1M1072 258h1M1072 263h1M1072 267h1M1072 272h1M1072 276h1M1072 281h1M1072 286h1M1072 290h1M1072 295h1M1072 299h1M1072 304h1M1072 308h1M1072 313h1M1072 317h1M1072 322h1M1072 326h1M1072 331h1M1072 335h1M1072 340h1M1072 345h1M1072 349h1M1072 354h1M1072 358h1M1072 363h1M1072 367h1M1072 372h1M1072 376h1M1072 381h1M1072 385h1M1072 390h1M1072 394h1M1072 399h1M1072 404h1M1072 408h1M1072 413h1M1072 417h1M1072 422h1M1072 426h1M1072 431h1M1072 435h1M1072 440h1M1072 444h1M1072 449h1M1072 454h1" stroke="#fff" stroke-width="1" fill="none"/>
<rect x="0" y="226" width="1073" height="3" fill="#888"/>
<polyline points="439,251 537,228 539,228 539,455 540,455 540,228 676,260 794,232" fill="none" stroke="#cc0000" stroke-width="2"/>
<rect x="439" y="224" width="16" height="2" fill="#cc9900"/>
<rect x="439" y="226" width="12" height="1" fill="#00cccc"/>
<rect x="439" y="227" width="14" height="2" fill="#00cc33"/>
<rect x="455" y="224" width="24" height="1" fill="#66cc00"/>
<rect x="455" y="225" width="42" height="1" fill="#cc9900"/>
<rect x="497" y="225" width="23" height="1" fill="#44cc11"/>
<rect x="451" y="226" width="176" height="2" fill="#00cc33"/>
<rect x="453" y="228" width="75" height="1" fill="#7a5a9a"/>
<rect x="528" y="228" width="49" height="1" fill="#cc9900"/>
<rect x="577" y="228" width="41" height="2" fill="#cc9900"/>
<rect x="618" y="229" width="42" height="2" fill="#cc9900"/>
<rect x="627" y="226" width="124" height="1" fill="#908a90"/>
<rect x="627" y="227" width="33" height="2" fill="#00cc33"/>
<rect x="660" y="227" width="44" height="3" fill="#00cc33"/>
<rect x="660" y="230" width="34" height="2" fill="#cc9900"/>
<rect x="692" y="229" width="10" height="1" fill="#cc9900"/>
<rect x="704" y="226" width="47" height="2" fill="#908a90"/>
<rect x="704" y="228" width="90" height="2" fill="#00cc33"/>
<rect x="704" y="230" width="30" height="1" fill="#cc9900"/>
<rect x="724" y="230" width="250" height="2" fill="#00cccc"/>
<rect x="751" y="226" width="23" height="1" fill="#908a90"/>
<rect x="751" y="227" width="23" height="1" fill="#66cc00"/>
<rect x="774" y="226" width="18" height="1" fill="#908a90"/>
<rect x="774" y="227" width="18" height="1" fill="#cc9900"/>
<rect x="792" y="226" width="182" height="1" fill="#77bb00"/>
<rect x="792" y="227" width="182" height="1" fill="#99a000"/>
<rect x="792" y="228" width="182" height="2" fill="#00cc33"/>
<rect x="974" y="226" width="99" height="2" fill="#00cc33"/>
<rect x="974" y="228" width="99" height="1" fill="#cc9900"/>
<rect x="538" y="228" width="3" height="227" fill="#cc0000"/>
<rect x="539" y="225" width="2" height="5" fill="#cc9900"/>
<text x="5" y="140" fill="#00cc33" font-family="DejaVu Sans,Liberation Sans,sans-serif" font-size="13.33" text-rendering="geometricPrecision" letter-spacing="-0.106">joint.2.vel-cmd</text>
<text x="5" y="157" fill="#00cc33" font-family="DejaVu Sans,Liberation Sans,sans-serif" font-size="13.33" text-rendering="geometricPrecision" letter-spacing="-0.280">100 /div</text>
<text x="5" y="173" fill="#6600cc" font-family="DejaVu Sans,Liberation Sans,sans-serif" font-size="13.33" text-rendering="geometricPrecision" letter-spacing="-0.106">joint.1.vel-cmd</text>
<text x="5" y="190" fill="#6600cc" font-family="DejaVu Sans,Liberation Sans,sans-serif" font-size="13.33" text-rendering="geometricPrecision" letter-spacing="-0.280">100 /div</text>
<text x="5" y="206" fill="#00cccc" font-family="DejaVu Sans,Liberation Sans,sans-serif" font-size="13.33" text-rendering="geometricPrecision" letter-spacing="-0.106">joint.0.vel-cmd</text>
<text x="5" y="223" fill="#00cccc" font-family="DejaVu Sans,Liberation Sans,sans-serif" font-size="13.33" text-rendering="geometricPrecision" letter-spacing="-0.251">50 /div</text>
<text x="5" y="264" fill="#cc0000" font-family="DejaVu Sans,Liberation Sans,sans-serif" font-size="13.33" text-rendering="geometricPrecision" letter-spacing="-0.175">joint.0.acc-cmd</text>
<text x="5" y="281" fill="#cc0000" font-family="DejaVu Sans,Liberation Sans,sans-serif" font-size="13.33" text-rendering="geometricPrecision" letter-spacing="-0.251">50 /div</text>
<text x="5" y="296" fill="#66cc00" font-family="DejaVu Sans,Liberation Sans,sans-serif" font-size="13.33" text-rendering="geometricPrecision" letter-spacing="-0.175">joint.1.acc-cmd</text>
<text x="5" y="313" fill="#66cc00" font-family="DejaVu Sans,Liberation Sans,sans-serif" font-size="13.33" text-rendering="geometricPrecision" letter-spacing="-0.280">500 /div</text>
<text x="5" y="328" fill="#cc9900" font-family="DejaVu Sans,Liberation Sans,sans-serif" font-size="13.33" text-rendering="geometricPrecision" letter-spacing="-0.175">joint.2.acc-cmd</text>
<text x="5" y="345" fill="#cc9900" font-family="DejaVu Sans,Liberation Sans,sans-serif" font-size="13.33" text-rendering="geometricPrecision" letter-spacing="-0.280">500 /div</text>
</svg>
<div class="btn" style="left:41px;top:733px;width:65px;height:36px;background:#cc0000;border:2px solid #d0cac5;border-radius:6px;box-shadow:none"></div>
<div class="t" style="left:41px;top:742px;width:65px;text-align:center;letter-spacing:-0.483px">1</div>
<div class="btn" style="left:108px;top:733px;width:65px;height:36px;background:#00cccc;border:2px solid #d0cac5;border-radius:6px;box-shadow:none"></div>
<div class="t" style="left:108px;top:742px;width:65px;text-align:center;letter-spacing:-0.483px">2</div>
<div class="btn" style="left:175px;top:733px;width:65px;height:36px;background:#66cc00;border:2px solid #d0cac5;border-radius:6px;box-shadow:none"></div>
<div class="t" style="left:175px;top:742px;width:65px;text-align:center;letter-spacing:-0.483px">3</div>
<div class="btn" style="left:242px;top:733px;width:65px;height:36px;background:#6600cc;border:2px solid #d0cac5;border-radius:6px;box-shadow:none"></div>
<div class="t" style="left:242px;top:742px;width:65px;text-align:center;letter-spacing:-0.483px">4</div>
<div class="btn" style="left:310px;top:733px;width:65px;height:36px;background:#cc9900;border:2px solid #d0cac5;border-radius:6px;box-shadow:none"></div>
<div class="t" style="left:310px;top:742px;width:65px;text-align:center;letter-spacing:-0.483px">5</div>
<div class="btn" style="left:377px;top:733px;width:65px;height:36px;background:#00cc33;border:2px solid #d0cac5;border-radius:6px;box-shadow:none"></div>
<div class="t" style="left:377px;top:742px;width:65px;text-align:center;letter-spacing:-0.483px">6</div>
<div class="btn" style="left:444px;top:733px;width:65px;height:36px;border:2px solid #cbc4be;border-radius:6px"></div>
<div class="t" style="left:444px;top:742px;width:65px;text-align:center;letter-spacing:-0.483px">7</div>
<div class="btn" style="left:511px;top:733px;width:65px;height:36px;border:2px solid #cbc4be;border-radius:6px"></div>
<div class="t" style="left:511px;top:742px;width:65px;text-align:center;letter-spacing:-0.483px">8</div>
<div class="btn" style="left:578px;top:733px;width:65px;height:36px;border:2px solid #cbc4be;border-radius:6px"></div>
<div class="t" style="left:578px;top:742px;width:65px;text-align:center;letter-spacing:-0.483px">9</div>
<div class="btn" style="left:645px;top:733px;width:65px;height:36px;border:2px solid #cbc4be;border-radius:6px"></div>
<div class="t" style="left:645px;top:742px;width:65px;text-align:center;letter-spacing:-0.483px">10</div>
<div class="btn" style="left:712px;top:733px;width:65px;height:36px;border:2px solid #cbc4be;border-radius:6px"></div>
<div class="t" style="left:712px;top:742px;width:65px;text-align:center;letter-spacing:-0.483px">11</div>
<div class="btn" style="left:779px;top:733px;width:65px;height:36px;border:2px solid #cbc4be;border-radius:6px"></div>
<div class="t" style="left:779px;top:742px;width:65px;text-align:center;letter-spacing:-0.483px">12</div>
<div class="btn" style="left:846px;top:733px;width:65px;height:36px;border:2px solid #cbc4be;border-radius:6px"></div>
<div class="t" style="left:846px;top:742px;width:65px;text-align:center;letter-spacing:-0.483px">13</div>
<div class="btn" style="left:913px;top:733px;width:65px;height:36px;border:2px solid #cbc4be;border-radius:6px"></div>
<div class="t" style="left:913px;top:742px;width:65px;text-align:center;letter-spacing:-0.483px">14</div>
<div class="btn" style="left:980px;top:733px;width:65px;height:36px;border:2px solid #cbc4be;border-radius:6px"></div>
<div class="t" style="left:980px;top:742px;width:65px;text-align:center;letter-spacing:-0.483px">15</div>
<div class="btn" style="left:1047px;top:733px;width:65px;height:36px;border:2px solid #cbc4be;border-radius:6px"></div>
<div class="t" style="left:1047px;top:742px;width:65px;text-align:center;letter-spacing:-0.483px">16</div>
<div class="t" style="left:40px;top:770px;letter-spacing:-0.236px">Selected Channel</div>
<div class="hl" style="left:153px;top:779px;width:960px"></div>
<div class="vl" style="left:40px;top:784px;height:40px"></div>
<div class="vl" style="left:1112px;top:779px;height:40px"></div>
<div class="vl sep" style="left:70px;top:788px;height:30px"></div>
<div class="t" style="left:49px;top:797px;letter-spacing:0.189px">--</div>
<div class="btn" style="left:77px;top:788px;width:410px;height:40px"></div>
<div class="t" style="left:77px;top:796px;width:410px;text-align:center;letter-spacing:0.189px">------</div>
<div class="t" style="left:1114px;top:164px;letter-spacing:-0.216px">Run Mode</div>
<div class="hl" style="left:1180px;top:174px;width:12px"></div>
<div class="vl" style="left:1114px;top:179px;height:92px"></div>
<div class="vl" style="left:1191px;top:174px;height:97px"></div>
<div class="hl" style="left:1114px;top:270px;width:78px"></div>
<div class="radio" style="left:1119px;top:185px"></div>
<div class="t" style="left:1139px;top:184px;letter-spacing:-0.079px">Normal</div>
<div class="radio" style="left:1119px;top:207px"></div>
<div class="t" style="left:1139px;top:206px;letter-spacing:-0.165px">Single</div>
<div class="radio" style="left:1119px;top:229px"></div>
<div class="t" style="left:1139px;top:228px;letter-spacing:0.042px">Roll</div>
<div class="radio on" style="left:1119px;top:251px"></div>
<div class="t" style="left:1139px;top:250px;letter-spacing:-0.328px">Stop</div>
<div class="t" style="left:1193px;top:164px;letter-spacing:-0.277px">Trigger</div>
<div class="hl" style="left:1238px;top:174px;width:40px"></div>
<div class="vl" style="left:1193px;top:179px;height:640px"></div>
<div class="radio on" style="left:1198px;top:185px"></div>
<div class="t" style="left:1218px;top:184px;letter-spacing:-0.079px">Normal</div>
<div class="radio" style="left:1198px;top:207px"></div>
<div class="t" style="left:1218px;top:206px;letter-spacing:-0.239px">Auto</div>
<div class="btn" style="left:1195px;top:227px;width:90px;height:32px"></div>
<div class="t" style="left:1195px;top:234px;width:75px;text-align:center;letter-spacing:-0.168px">Force</div>
<div class="t" style="left:1196px;top:260px;letter-spacing:-0.086px">Level</div>
<div class="t" style="left:1241px;top:260px;letter-spacing:-0.048px">Pos</div>
<div class="hl sep" style="left:1194px;top:706px;width:80px"></div>
<div class="t" style="left:1195px;top:710px;width:75px;text-align:center;letter-spacing:-0.086px">Level</div>
<div class="t" style="left:1195px;top:728px;width:75px;text-align:center;letter-spacing:0.189px">----</div>
<div class="btn" style="left:1195px;top:745px;width:90px;height:32px"></div>
<div class="t" style="left:1195px;top:752px;width:75px;text-align:center;letter-spacing:-0.089px">Rising</div>
<div class="btn" style="left:1195px;top:779px;width:90px;height:50px"></div>
<div class="t" style="left:1211px;top:783px;letter-spacing:-0.348px">Source</div>
<div class="t" style="left:1211px;top:800px;letter-spacing:-0.196px">None</div>
<div class="t" style="left:1114px;top:271px;letter-spacing:-0.118px">Vertical</div>
<div class="hl" style="left:1163px;top:280px;width:29px"></div>
<div class="vl" style="left:1114px;top:286px;height:540px"></div>
<div class="vl" style="left:1191px;top:280px;height:540px"></div>
<div class="t" style="left:1119px;top:289px;letter-spacing:-0.164px">Gain</div>
<div class="t" style="left:1160px;top:289px;letter-spacing:-0.048px">Pos</div>
<div class="hl sep" style="left:1115px;top:740px;width:76px"></div>
<div class="t" style="left:1115px;top:744px;width:76px;text-align:center;letter-spacing:-0.174px">Scale</div>
<div class="t" style="left:1115px;top:762px;width:76px;text-align:center;letter-spacing:0.189px">----</div>
<div class="btn" style="left:1115px;top:779px;width:76px;height:50px"></div>
<div class="t" style="left:1133px;top:783px;letter-spacing:-0.043px">Offset</div>
<div class="t" style="left:1133px;top:800px;letter-spacing:-0.434px">0.000</div>
<div class="trough" style="left:1132px;top:318px;width:4px;height:407px"></div>
<div class="fill" style="left:1132px;top:318px;width:4px;height:231px"></div>
<div class="knob" style="left:1124px;top:539px"></div>
<div class="trough" style="left:1170px;top:318px;width:4px;height:407px"></div>
<div class="fill" style="left:1170px;top:318px;width:4px;height:203px"></div>
<div class="knob" style="left:1162px;top:511px"></div>
<div class="trough" style="left:1211px;top:289px;width:4px;height:402px"></div>
<div class="fill" style="left:1211px;top:289px;width:4px;height:201px"></div>
<div class="knob" style="left:1203px;top:480px"></div>
<div class="trough" style="left:1250px;top:289px;width:4px;height:402px"></div>
<div class="fill" style="left:1250px;top:289px;width:4px;height:201px"></div>
<div class="knob" style="left:1242px;top:480px"></div>
</div></body></html>
